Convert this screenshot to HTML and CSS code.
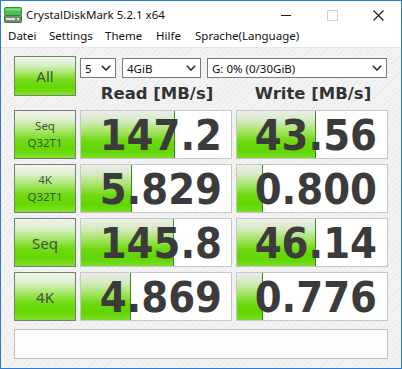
FILE: index.html
```html
<!DOCTYPE html>
<html>
<head>
<meta charset="utf-8">
<link rel="stylesheet" href="styles.css">
</head>
<body>
<div class="window">
  <div class="titlebar">
    <svg class="appicon" width="18" height="16" viewBox="0 0 18 16">
      <rect x="0.5" y="0.5" width="17" height="8" rx="1" fill="#4cc04f" stroke="#2f8f33"/>
      <rect x="1.5" y="1.5" width="15" height="2" fill="#7fdc82"/>
      <rect x="0.5" y="8.5" width="17" height="7" rx="1" fill="#6f8f70" stroke="#4b6a4c"/>
      <rect x="2" y="11" width="9" height="2" fill="#d9e6d9"/>
      <circle cx="14" cy="12" r="1.2" fill="#b6ffb6"/>
    </svg>
    <span class="title">CrystalDiskMark 5.2.1 x64</span>
    <div class="controls">
      <span class="ctl"><svg width="10" height="10" viewBox="0 0 10 10"><line x1="0" y1="5.5" x2="10" y2="5.5" stroke="#1a1a1a" stroke-width="1"/></svg></span>
      <span class="ctl"><svg width="11" height="11" viewBox="0 0 11 11"><rect x="0.5" y="0.5" width="10" height="10" fill="none" stroke="#cfcfcf" stroke-width="1"/></svg></span>
      <span class="ctl"><svg width="11" height="11" viewBox="0 0 11 11"><path d="M0.5 0.5 L10.5 10.5 M10.5 0.5 L0.5 10.5" stroke="#1a1a1a" stroke-width="1.1"/></svg></span>
    </div>
  </div>
  <div class="menubar">
    <span class="mi m1">Datei</span>
    <span class="mi m2">Settings</span>
    <span class="mi m3">Theme</span>
    <span class="mi m4">Hilfe</span>
    <span class="mi">Sprache(Language)</span>
  </div>
  <div class="content">
    <div class="grid">
      <div class="btn all">All</div>
      <div class="topright">
        <div class="selects">
          <div class="sel s1"><span>5</span><svg class="chev" width="10" height="6" viewBox="0 0 10 6"><path d="M0.8 0.8 L5 5 L9.2 0.8" fill="none" stroke="#222" stroke-width="1.5"/></svg></div>
          <div class="sel s2"><span>4GiB</span><svg class="chev" width="10" height="6" viewBox="0 0 10 6"><path d="M0.8 0.8 L5 5 L9.2 0.8" fill="none" stroke="#222" stroke-width="1.5"/></svg></div>
          <div class="sel s3"><span>G: 0% (0/30GiB)</span><svg class="chev" width="10" height="6" viewBox="0 0 10 6"><path d="M0.8 0.8 L5 5 L9.2 0.8" fill="none" stroke="#222" stroke-width="1.5"/></svg></div>
        </div>
        <div class="heads">
          <div class="head">Read [MB/s]</div>
          <div class="head">Write [MB/s]</div>
        </div>
      </div>

      <div class="btn two"><span>Seq</span><span>Q32T1</span></div>
      <div class="cell read"><div class="bar" style="width:94px"></div><span class="val">147.2</span></div>
      <div class="cell write"><div class="bar" style="width:79px"></div><span class="val">43.56</span></div>

      <div class="btn two"><span>4K</span><span>Q32T1</span></div>
      <div class="cell read"><div class="bar" style="width:51px"></div><span class="val">5.829</span></div>
      <div class="cell write"><div class="bar" style="width:26px"></div><span class="val">0.800</span></div>

      <div class="btn one">Seq</div>
      <div class="cell read"><div class="bar" style="width:93px"></div><span class="val">145.8</span></div>
      <div class="cell write"><div class="bar" style="width:79px"></div><span class="val">46.14</span></div>

      <div class="btn one">4K</div>
      <div class="cell read"><div class="bar" style="width:50px"></div><span class="val">4.869</span></div>
      <div class="cell write"><div class="bar" style="width:26px"></div><span class="val">0.776</span></div>
    </div>
    <div class="status"></div>
  </div>
</div>
</body>
</html>
```

FILE: styles.css
```css
* { box-sizing: border-box; }
html, body { margin: 0; padding: 0; background: #ffffff; }
body { font-family: "Noto Sans", "Open Sans", sans-serif; }

.window {
  width: 402px;
  height: 369px;
  border: 1px solid #2b7bd0;
  display: flex;
  flex-direction: column;
  background: #ffffff;
  overflow: hidden;
}

.titlebar {
  height: 27px;
  display: flex;
  align-items: center;
  background: #ffffff;
}
.appicon { margin-left: 3px; margin-top: 1px; flex: none; }
.title {
  margin-left: 4px;
  font-size: 11.5px;
  color: #111;
  line-height: 16px;
}
.controls { margin-left: auto; display: flex; height: 100%; }
.ctl {
  width: 46px;
  display: flex;
  align-items: center;
  justify-content: center;
  padding-top: 1px;
}

.menubar {
  height: 19px;
  display: flex;
  align-items: center;
  padding-bottom: 3px;
  padding-left: 7px;
  font-size: 11.5px;
  line-height: 16px;
  color: #111;
  background: #ffffff;
}
.mi { flex: none; }
.m1 { width: 41px; }
.m2 { width: 56px; }
.m3 { width: 51px; }
.m4 { width: 39px; }

.content {
  flex: 1;
  padding: 8px 13px 0 13px;
  background-color: #f1f1f1;
  background-image: repeating-linear-gradient(135deg, #f3f3f3 0px, #f3f3f3 3px, #ebebeb 3px, #ebebeb 4px);
  border-top: 1px solid #e6e6e6;
}

.grid {
  display: grid;
  grid-template-columns: 62px 152px 152px;
  grid-template-rows: 49px repeat(4, 49px);
  column-gap: 4px;
  row-gap: 5px;
}

.btn {
  border: 1px solid #72826f;
  background: linear-gradient(to bottom, #f2f5f0 0%, #dcefcc 20%, #a8e66a 42%, #72db18 62%, #64d800 82%, #84e02c 100%);
  color: #435238;
  display: flex;
  flex-direction: column;
  align-items: center;
  justify-content: center;
  font-family: "Noto Sans", "Open Sans", sans-serif;
}
.btn.all { height: 40px; font-size: 15px; }
.btn.two { font-size: 11.5px; line-height: 16px; gap: 1px; }
.btn.one { font-size: 15px; }

.topright {
  grid-column: 2 / 4;
  display: flex;
  flex-direction: column;
}
.selects {
  display: flex;
  gap: 6px;
  margin-top: 2px;
  height: 20px;
}
.sel {
  height: 20px;
  border: 1px solid #7a7a7a;
  background: #ffffff;
  display: flex;
  align-items: center;
  padding-left: 4px;
  padding-right: 4px;
  font-size: 11.5px;
  color: #111;
}
.sel span { flex: 1; }
.chev { flex: none; }
.s1 { width: 36px; }
.s2 { width: 79px; }
.s3 { width: 180px; }

.heads {
  display: grid;
  grid-template-columns: 152px 152px;
  column-gap: 4px;
  height: 28px;
  align-items: center;
}
.head {
  text-align: center;
  font-family: "DejaVu Sans", sans-serif;
  font-weight: bold;
  font-size: 16.5px;
  color: #333333;
  padding-top: 4px;
  padding-left: 2px;
}

.cell {
  position: relative;
  border: 1px solid #c6c6c6;
  background: #ffffff;
  display: flex;
  align-items: center;
  justify-content: flex-end;
  overflow: hidden;
}
.cell.read { padding-right: 9px; }
.cell.write { padding-right: 10px; }
.bar {
  position: absolute;
  left: 0;
  top: 0;
  bottom: 0;
  background: linear-gradient(to bottom, #eceeea 0%, #d6ebc4 20%, #a2e460 44%, #6ed914 64%, #60d500 84%, #7ade26 100%);
  border-right: 1px solid #3f8a1e;
}
.val {
  position: relative;
  font-family: "DejaVu Sans Condensed", "DejaVu Sans", sans-serif;
  font-stretch: condensed;
  font-weight: bold;
  font-size: 43px;
  line-height: 44px;
  color: #3b3b3b;
  padding-top: 1px;
}

.status {
  margin-top: 8px;
  height: 30px;
  border: 1px solid #c2c2c2;
  background: #fdfdfd;
}
```
